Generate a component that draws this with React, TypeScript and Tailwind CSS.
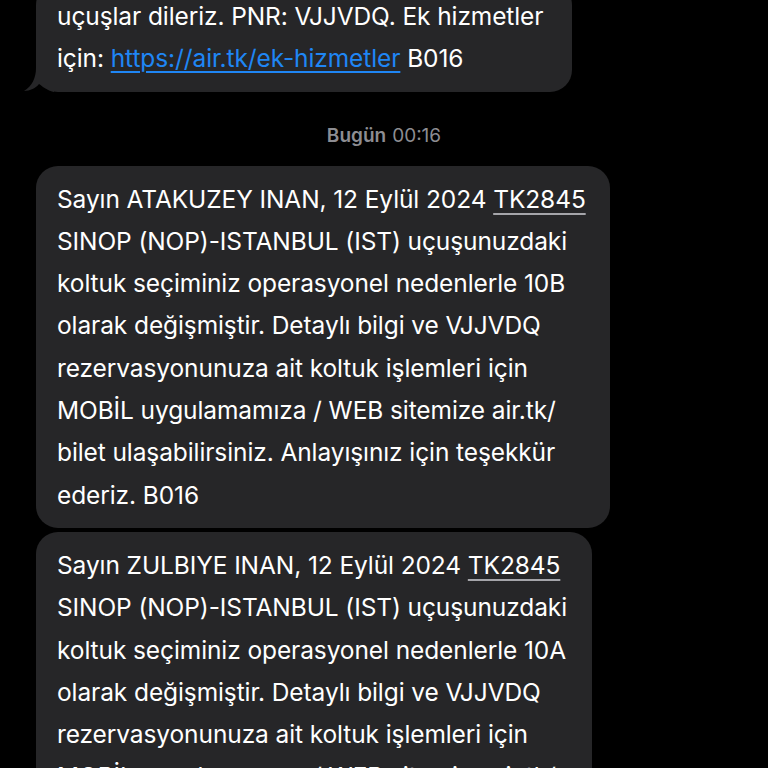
import React from "react";

const font = { fontFamily: "Inter, 'Noto Sans', sans-serif" };

function Bubble({
  lines,
  className,
  tail,
}: {
  lines: React.ReactNode[];
  className: string;
  tail?: boolean;
}) {
  return (
    <div className={`relative ${className}`}>
      <div className="rounded-[22px] bg-[#262628] pl-[21px] py-[12px] text-[24.5px] leading-[42.3px] text-white tracking-[-0.1px] whitespace-nowrap">
        {lines.map((l, i) => (
          <div key={i}>{l}</div>
        ))}
      </div>
      {tail && (
        <svg
          className="absolute left-[-12px] bottom-0"
          width="30"
          height="24"
          viewBox="0 0 30 24"
        >
          <path d="M12 0 L30 0 L30 24 C22 22 18 18 15 16 C12 20 6 23 0 23 C8 18 12 10 12 0 Z" fill="#262628" />
        </svg>
      )}
    </div>
  );
}

const TK = <span className="underline decoration-[#a5a5aa] underline-offset-[5px] decoration-[1.5px]">TK2845</span>;

export default function App() {
  return (
    <div className="min-h-screen h-[768px] overflow-hidden bg-black" style={font}>
      <div className="flex flex-col pl-[36px]">
        {/* earlier message, scrolled partly out of view */}
        <Bubble
          tail
          className="mt-[-17px] w-[536px]"
          lines={[
            "uçuşlar dileriz. PNR: VJJVDQ. Ek hizmetler",
            <>
              için:{" "}
              <span className="text-[#1f86f5] underline underline-offset-[4px] decoration-[1.5px]">
                https://air.tk/ek-hizmetler
              </span>{" "}
              B016
            </>,
          ]}
        />
        <div className="pt-[34px] pb-[20px] leading-[20px] flex justify-center pr-[36px] text-[19px] text-[#8d8d92]">
          <span className="font-semibold">Bugün</span>
          <span className="ml-[6px]">00:16</span>
        </div>
        <Bubble
          className="w-[574px]"
          lines={[
            <>Sayın ATAKUZEY INAN, 12 Eylül 2024 {TK}</>,
            "SINOP (NOP)-ISTANBUL (IST) uçuşunuzdaki",
            "koltuk seçiminiz operasyonel nedenlerle 10B",
            "olarak değişmiştir. Detaylı bilgi ve VJJVDQ",
            "rezervasyonunuza ait koltuk işlemleri için",
            "MOBİL uygulamamıza / WEB sitemize air.tk/",
            "bilet ulaşabilirsiniz. Anlayışınız için teşekkür",
            "ederiz. B016",
          ]}
        />
        <Bubble
          className="mt-[4px] w-[556px]"
          lines={[
            <>Sayın ZULBIYE INAN, 12 Eylül 2024 {TK}</>,
            "SINOP (NOP)-ISTANBUL (IST) uçuşunuzdaki",
            "koltuk seçiminiz operasyonel nedenlerle 10A",
            "olarak değişmiştir. Detaylı bilgi ve VJJVDQ",
            "rezervasyonunuza ait koltuk işlemleri için",
            "MOBİL uygulamamıza / WEB sitemize air.tk/",
            "bilet ulaşabilirsiniz. Anlayışınız için teşekkür",
            "ederiz. B016",
          ]}
        />
      </div>
    </div>
  );
}
